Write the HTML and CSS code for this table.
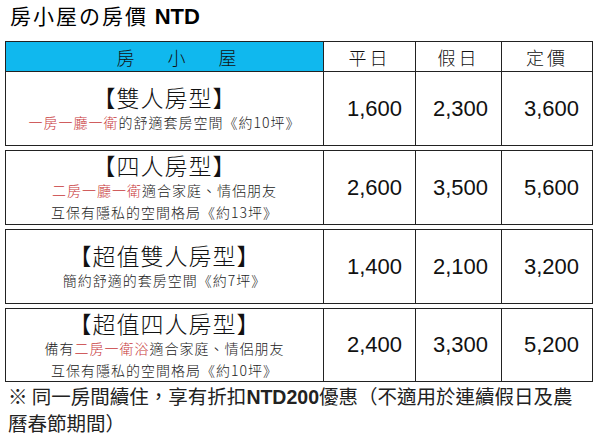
FILE: index.html
```html
<!DOCTYPE html>
<html lang="zh-Hant">
<head>
<meta charset="utf-8">
<link rel="stylesheet" href="styles.css">
</head>
<body>
<div class="page">
  <h1 class="title">房小屋の房價 <span class="title-en">NTD</span></h1>
  <div class="table">
    <div class="group">
      <div class="head head-name"><span>房</span><span>小</span><span>屋</span></div>
      <div class="head">平日</div>
      <div class="head">假日</div>
      <div class="head">定價</div>
      <div class="cell name">
        <div class="room">【雙人房型】</div>
        <div class="desc"><span class="red">一房一廳一衛</span>的舒適套房空間《約10坪》</div>
      </div>
      <div class="cell num">1,600</div>
      <div class="cell num">2,300</div>
      <div class="cell num">3,600</div>
    </div>
    <div class="group">
      <div class="cell name">
        <div class="room">【四人房型】</div>
        <div class="desc"><span class="red">二房一廳一衛</span>適合家庭、情侶朋友</div>
        <div class="desc">互保有隱私的空間格局《約13坪》</div>
      </div>
      <div class="cell num">2,600</div>
      <div class="cell num">3,500</div>
      <div class="cell num">5,600</div>
    </div>
    <div class="group">
      <div class="cell name">
        <div class="room">【超值雙人房型】</div>
        <div class="desc">簡約舒適的套房空間《約7坪》</div>
      </div>
      <div class="cell num">1,400</div>
      <div class="cell num">2,100</div>
      <div class="cell num">3,200</div>
    </div>
    <div class="group group-last">
      <div class="cell name">
        <div class="room">【超值四人房型】</div>
        <div class="desc">備有<span class="red">二房一衛浴</span>適合家庭、情侶朋友</div>
        <div class="desc">互保有隱私的空間格局《約10坪》</div>
      </div>
      <div class="cell num">2,400</div>
      <div class="cell num">3,300</div>
      <div class="cell num">5,200</div>
    </div>
  </div>
  <p class="note">※ 同一房間續住，享有折扣<b class="note-en">NTD200</b>優惠（不適用於連續假日及農<br>曆春節期間）</p>
</div>
</body>
</html>
```

FILE: styles.css
```css
html, body {
  margin: 0;
  padding: 0;
  background: #fff;
}
body {
  font-family: "Noto Sans CJK TC", "Noto Sans", sans-serif;
  color: #111;
}
.page {
  padding: 0 0 0 5px;
  width: 588px;
}
.title {
  margin: 0 0 9px 5px;
  font-size: 21px;
  line-height: 30px;
  font-weight: 400;
  letter-spacing: 2px;
  color: #000;
}
.title-en {
  font-family: "Liberation Sans", Arial, sans-serif;
  font-weight: 700;
  font-size: 22px;
  letter-spacing: 0;
}
.table {
  display: flex;
  flex-direction: column;
  gap: 4px;
}
.group {
  display: grid;
  grid-template-columns: 317px 92px 86px 91px;
  border: 1px solid #222;
}
.head {
  height: 29px;
  border-bottom: 1px solid #222;
  border-left: 1px solid #222;
  display: flex;
  align-items: center;
  justify-content: center;
  font-size: 18px;
  font-weight: 300;
  letter-spacing: 3px;
  color: #111;
}
.head-name {
  border-left: 0;
  background: #10b8ee;
  gap: 33px;
  padding-left: 24px;
  letter-spacing: 0;
}
.cell {
  height: 73px;
  border-left: 1px solid #222;
  box-sizing: border-box;
}
.group-last .cell {
  height: 72px;
}
.cell.name {
  border-left: 0;
  display: flex;
  flex-direction: column;
  align-items: center;
  justify-content: center;
}
.room {
  font-size: 23px;
  line-height: 27px;
  font-weight: 300;
  letter-spacing: 1px;
  font-feature-settings: "halt";
  color: #111;
}
.desc {
  font-size: 14px;
  line-height: 22px;
  font-weight: 300;
  letter-spacing: 1px;
  color: #222;
}
.red {
  color: #c8383a;
}
.num {
  display: flex;
  align-items: center;
  justify-content: flex-end;
  padding-right: 13px;
  font-family: "Liberation Sans", Arial, sans-serif;
  font-size: 22px;
  color: #111;
}
.note {
  margin: 1px 0 0 3px;
  font-size: 19.5px;
  line-height: 25px;
  color: #222;
  width: 600px;
}
.note-en {
  font-family: "Liberation Sans", Arial, sans-serif;
  font-weight: 700;
}
```
